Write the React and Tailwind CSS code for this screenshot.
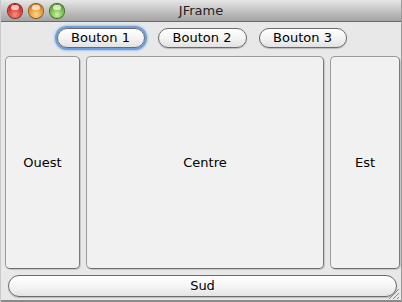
import React from "react";

const font = { fontFamily: '"Lucida Grande", "DejaVu Sans", "Liberation Sans", sans-serif' };

function Light({ from, to, ring }) {
  return (
    <div
      className="w-[14px] h-[14px] rounded-full relative"
      style={{
        background: `radial-gradient(circle at 50% 75%, ${from} 0%, ${to} 80%)`,
        boxShadow: `0 0 0 1px ${ring}`,
      }}
    >
      <div className="absolute left-[3px] top-[1px] w-[8px] h-[5px] rounded-full bg-white/70" />
    </div>
  );
}

function MacButton({ children, focused, className = "" }) {
  return (
    <div
      className={
        "h-[20px] rounded-full border border-[#6b6b6b] flex items-center justify-center text-[13px] text-black bg-gradient-to-b from-white via-[#f4f4f4] to-[#e2e2e2] " +
        (focused ? "shadow-[0_0_0_2px_#6f9fd9,0_0_2px_3px_#a9c7ee] " : "shadow-[0_1px_1px_rgba(0,0,0,0.2)] ") +
        className
      }
    >
      {children}
    </div>
  );
}

function Panel({ children, className = "" }) {
  return (
    <div
      className={
        "rounded-[5px] border border-[#9a9a9a] border-b-[#6e6e6e] border-r-[#7a7a7a] bg-[#f1f1f1] shadow-[1px_1px_0_rgba(0,0,0,0.15)] flex items-center justify-center text-[13px] text-black " +
        className
      }
    >
      {children}
    </div>
  );
}

export default function App() {
  return (
    <div
      className="w-[402px] h-[302px] bg-[#e8e8e8] flex flex-col overflow-hidden border-l border-[#c9c9c9] border-r border-r-[#9a9a9a] relative"
      style={font}
    >
      <div className="h-[22px] shrink-0 bg-gradient-to-b from-[#e6e6e6] to-[#a3a3a3] border-b border-[#6a6a6a] flex items-center relative">
        <div className="flex items-center gap-[7px] pl-[7px]">
          <Light from="#ff8f80" to="#c8120a" ring="#7d2620" />
          <Light from="#ffd98a" to="#dc760a" ring="#87551a" />
          <Light from="#c8f59c" to="#4c9c1e" ring="#3a6a1e" />
        </div>
        <div className="absolute inset-0 flex items-center justify-center text-[13px] text-[#222]">
          JFrame
        </div>
      </div>
      <div className="flex justify-center pt-[6px] pl-[1px] gap-[12px]">
        <MacButton focused className="w-[88px]">Bouton 1</MacButton>
        <MacButton className="w-[89px] ml-[1px]">Bouton 2</MacButton>
        <MacButton className="w-[88px]">Bouton 3</MacButton>
      </div>
      <div className="flex pt-[8px] pl-[4px] gap-[6px] h-[221px] shrink-0">
        <Panel className="w-[75px]">Ouest</Panel>
        <Panel className="w-[238px]">Centre</Panel>
        <Panel className="w-[70px]">Est</Panel>
      </div>
      <div className="pl-[7px] pt-[6px]">
        <MacButton className="w-[389px] h-[22px] bg-gradient-to-b from-white via-[#f6f6f6] to-[#e4e4e4]">Sud</MacButton>
      </div>
      <div className="absolute left-0 right-0 bottom-0 h-[2px] bg-[#8a8a8a]" />
      <svg className="absolute right-[1px] bottom-[2px]" width="12" height="12" viewBox="0 0 12 12">
        <line x1="11" y1="1" x2="1" y2="11" stroke="#8a8a8a" strokeWidth="1" />
        <line x1="11" y1="5" x2="5" y2="11" stroke="#8a8a8a" strokeWidth="1" />
        <line x1="11" y1="9" x2="9" y2="11" stroke="#8a8a8a" strokeWidth="1" />
      </svg>
    </div>
  );
}
